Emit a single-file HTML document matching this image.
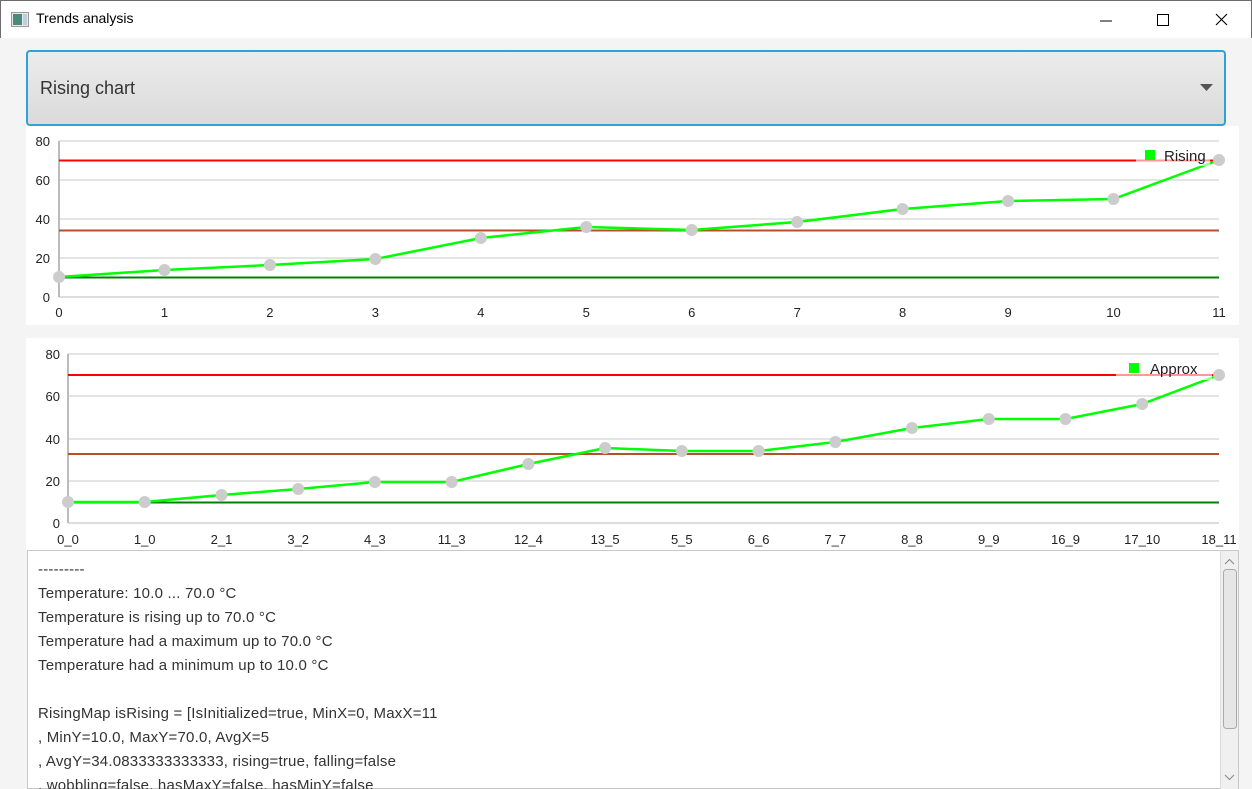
<!DOCTYPE html>
<html><head><meta charset="utf-8"><style>
*{margin:0;padding:0;box-sizing:border-box}
html,body{width:1252px;height:789px;overflow:hidden}
body{background:#f4f4f4;font-family:"Segoe UI","Liberation Sans",sans-serif;position:relative}
.title{position:absolute;left:0;top:0;width:1252px;height:38px;background:#fff;border:1px solid #6b6b6b;border-bottom:none}
.title span{position:absolute;left:35px;top:9px;font-size:14px;color:#000}
.combo{position:absolute;left:26px;top:50px;width:1200px;height:76px;border:2px solid #2ea3d6;border-radius:4px;background:linear-gradient(#ececec,#dadada)}
.combo span{position:absolute;left:12px;top:26px;font-size:18px;color:#333}
.panel{position:absolute;background:#fff}
.ta{position:absolute;left:27px;top:550px;width:1212px;height:239px;background:#fff;border:1px solid #c8c8c8;font-size:15px;color:#333;line-height:24px;padding:7px 0 0 10px;white-space:pre;letter-spacing:0.2px}
.sb{position:absolute;left:1220px;top:551px;width:18px;height:238px;background:#f0f0f0;border-left:1px solid #ddd}
</style></head><body>
<div class="title">
<svg style="position:absolute;left:10px;top:11px" width="18" height="15"><rect x="0.5" y="0.5" width="17" height="14" fill="#e8e8e8" stroke="#999"/><rect x="2" y="2" width="9" height="11" fill="#4a8a7a"/><rect x="12" y="2" width="4" height="11" fill="#b8d0e0"/></svg>
<span>Trends analysis</span>
<svg style="position:absolute;left:1090px;top:10px" width="150" height="20"><line x1="9" y1="10" x2="21" y2="10" stroke="#000"/><rect x="66.5" y="3.5" width="11" height="11" fill="none" stroke="#000"/><path d="M125 3 L136 14 M136 3 L125 14" stroke="#000" stroke-width="1.1"/></svg>
</div>
<div class="combo"><span>Rising chart</span><svg style="position:absolute;left:1172px;top:32px" width="14" height="8"><path d="M0 0 H13 L6.5 7Z" fill="#555"/></svg></div>
<div class="panel" style="left:26px;top:126px;width:1213px;height:199px"></div>
<div class="panel" style="left:26px;top:338px;width:1213px;height:212px"></div>
<svg style="position:absolute;left:0;top:0" width="1252" height="789" font-family="Segoe UI, Liberation Sans, sans-serif" font-size="13" fill="#222">
<g stroke="#c8c8c8" stroke-width="1"><line x1="59" y1="141" x2="1219" y2="141"/><line x1="59" y1="180" x2="1219" y2="180"/><line x1="59" y1="219" x2="1219" y2="219"/><line x1="59" y1="258" x2="1219" y2="258"/></g>
<line x1="59" y1="297" x2="1219" y2="297" stroke="#bbb"/>
<line x1="59" y1="141" x2="59" y2="297" stroke="#bbb" stroke-width="2"/>
<line x1="59" y1="160.5" x2="1219" y2="160.5" stroke="#f00" stroke-width="2"/>
<line x1="59" y1="230.5" x2="1219" y2="230.5" stroke="#b5502a" stroke-width="2"/>
<line x1="59" y1="277.5" x2="1219" y2="277.5" stroke="#008000" stroke-width="2"/>
<polyline fill="none" stroke="#0f0" stroke-width="2.5" points="59,277 164.5,270 269.9,265 375.4,259 480.8,238 586.3,227 691.7,230 797.2,222 902.6,209 1008.1,201 1113.5,199 1219,160"/>
<g fill="#ccc"><circle cx="59" cy="277" r="6"/><circle cx="164.5" cy="270" r="6"/><circle cx="269.9" cy="265" r="6"/><circle cx="375.4" cy="259" r="6"/><circle cx="480.8" cy="238" r="6"/><circle cx="586.3" cy="227" r="6"/><circle cx="691.7" cy="230" r="6"/><circle cx="797.2" cy="222" r="6"/><circle cx="902.6" cy="209" r="6"/><circle cx="1008.1" cy="201" r="6"/><circle cx="1113.5" cy="199" r="6"/><circle cx="1219" cy="160" r="6"/></g>
<rect x="1136" y="150" width="74" height="16" fill="#fff" opacity="0.6"/>
<rect x="1145" y="150" width="10" height="10" fill="#0f0"/>
<text x="1164" y="161" font-size="15">Rising</text>
<g text-anchor="end"><text x="50" y="146">80</text><text x="50" y="185">60</text><text x="50" y="224">40</text><text x="50" y="263">20</text><text x="50" y="302">0</text></g>
<g text-anchor="middle"><text x="59" y="317">0</text><text x="164.5" y="317">1</text><text x="269.9" y="317">2</text><text x="375.4" y="317">3</text><text x="480.8" y="317">4</text><text x="586.3" y="317">5</text><text x="691.7" y="317">6</text><text x="797.2" y="317">7</text><text x="902.6" y="317">8</text><text x="1008.1" y="317">9</text><text x="1113.5" y="317">10</text><text x="1219" y="317">11</text></g>

<g stroke="#c8c8c8"><line x1="68" y1="354" x2="1219" y2="354"/><line x1="68" y1="396" x2="1219" y2="396"/><line x1="68" y1="439" x2="1219" y2="439"/><line x1="68" y1="481" x2="1219" y2="481"/></g>
<line x1="68" y1="523" x2="1219" y2="523" stroke="#bbb"/>
<line x1="68" y1="354" x2="68" y2="523" stroke="#bbb" stroke-width="2"/>
<line x1="68" y1="375" x2="1219" y2="375" stroke="#f00" stroke-width="2"/>
<line x1="68" y1="454" x2="1219" y2="454" stroke="#b5502a" stroke-width="2"/>
<line x1="68" y1="502.5" x2="1219" y2="502.5" stroke="#008000" stroke-width="2"/>
<polyline fill="none" stroke="#0f0" stroke-width="2.5" points="68,502 144.7,502 221.5,495 298.2,489 374.9,482 451.7,482 528.4,464 605.1,448 681.8,451 758.6,451 835.3,442 912,428 988.8,419 1065.5,419 1142.2,404 1219,375"/>
<g fill="#ccc"><circle cx="68" cy="502" r="6"/><circle cx="144.7" cy="502" r="6"/><circle cx="221.5" cy="495" r="6"/><circle cx="298.2" cy="489" r="6"/><circle cx="374.9" cy="482" r="6"/><circle cx="451.7" cy="482" r="6"/><circle cx="528.4" cy="464" r="6"/><circle cx="605.1" cy="448" r="6"/><circle cx="681.8" cy="451" r="6"/><circle cx="758.6" cy="451" r="6"/><circle cx="835.3" cy="442" r="6"/><circle cx="912" cy="428" r="6"/><circle cx="988.8" cy="419" r="6"/><circle cx="1065.5" cy="419" r="6"/><circle cx="1142.2" cy="404" r="6"/><circle cx="1219" cy="375" r="6"/></g>
<rect x="1116" y="362" width="96" height="18" fill="#fff" opacity="0.6"/>
<rect x="1129" y="363" width="10" height="10" fill="#0f0"/>
<text x="1150" y="374" font-size="15">Approx</text>
<g text-anchor="end"><text x="60" y="359">80</text><text x="60" y="401">60</text><text x="60" y="444">40</text><text x="60" y="486">20</text><text x="60" y="528">0</text></g>
<g text-anchor="middle"><text x="68" y="544">0_0</text><text x="144.7" y="544">1_0</text><text x="221.5" y="544">2_1</text><text x="298.2" y="544">3_2</text><text x="374.9" y="544">4_3</text><text x="451.7" y="544">11_3</text><text x="528.4" y="544">12_4</text><text x="605.1" y="544">13_5</text><text x="681.8" y="544">5_5</text><text x="758.6" y="544">6_6</text><text x="835.3" y="544">7_7</text><text x="912" y="544">8_8</text><text x="988.8" y="544">9_9</text><text x="1065.5" y="544">16_9</text><text x="1142.2" y="544">17_10</text><text x="1219" y="544">18_11</text></g>
</svg>
<div class="ta">---------
Temperature: 10.0 ... 70.0 °C
Temperature is rising up to 70.0 °C
Temperature had a maximum up to 70.0 °C
Temperature had a minimum up to 10.0 °C

RisingMap isRising = [IsInitialized=true, MinX=0, MaxX=11
, MinY=10.0, MaxY=70.0, AvgX=5
, AvgY=34.0833333333333, rising=true, falling=false
, wobbling=false, hasMaxY=false, hasMinY=false</div>
<div class="sb">
<svg width="18" height="238"><path d="M4 13 L8.5 8.5 L13 13" fill="none" stroke="#888"/><rect x="2.5" y="18.5" width="13" height="159" rx="3" fill="#e6e6e6" stroke="#aaa"/><path d="M4 224 L8.5 228.5 L13 224" fill="none" stroke="#888"/></svg>
</div>
</body></html>
